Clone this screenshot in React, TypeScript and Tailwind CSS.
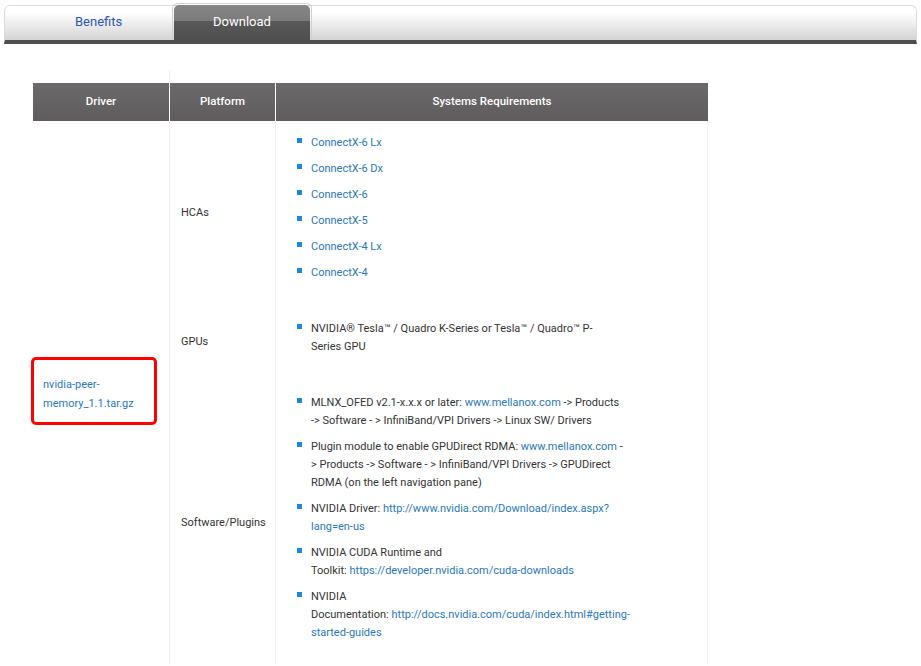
import React from "react";

const Bullet = () => (
  <span className="absolute left-[-14px] top-[4px] w-[5px] h-[5px] bg-[#1a8ad4]" />
);

const Li = ({ children }: { children: React.ReactNode }) => (
  <li className="relative mb-[8px] whitespace-nowrap">
    <Bullet />
    {children}
  </li>
);

const A = ({ children }: { children: React.ReactNode }) => (
  <a className="text-[#2a77bb]">{children}</a>
);

export default function App() {
  return (
    <div
      className="w-[921px] h-[666px] bg-white overflow-hidden text-[11px] text-[#333]"
      style={{ fontFamily: "Roboto, 'Liberation Sans', sans-serif" }}
    >
      {/* Tab bar */}
      <div className="pt-[5px] pl-[4px] w-[917px]">
        <div className="flex h-[39px] rounded-t-[6px] border-t border-x border-[#dcdcdc] border-b-4 border-b-[#4e4e4e] bg-[linear-gradient(#ffffff,#ffffff_20%,#ececec_55%,#d3d3d3)]">
          <div className="w-[167px] pl-[70px] pt-[6px] text-[13px] text-[#2c55b6]">Benefits</div>
          <div className="w-[140px] -mt-[3px] rounded-t-[6px] border border-b-0 border-[#cfcfcf] p-[1px] pb-0">
            <div className="h-full rounded-t-[5px] bg-[linear-gradient(#868686,#7b7b7b_46%,#585858_46%,#4f4f4f)] flex justify-center pt-[7px] text-[13px] text-white">
              Download
            </div>
          </div>
          <div className="flex-1" />
        </div>
      </div>

      {/* Table */}
      <div className="ml-[33px] mt-[26px] w-[675px]">
        <div className="grid grid-cols-[136px_106px_433px] h-[13px]">
          <div />
          <div className="border-l border-[#eeeeee]" />
          <div />
        </div>
        <div className="grid grid-cols-[136px_106px_433px] h-[38px] bg-[linear-gradient(#6b6969,#5e5c5c)] text-white text-[11.5px] font-medium">
          <div className="flex items-center justify-center">Driver</div>
          <div className="flex items-center justify-center border-l border-white">Platform</div>
          <div className="flex items-center justify-center border-l border-white">Systems Requirements</div>
        </div>
        <div className="grid grid-cols-[136px_106px_433px] grid-rows-[182px_76px_286px] border-r border-[#f0f0f0]">
          <div className="row-span-3 flex items-center pl-[10px] pt-[2px]">
            <div className="relative leading-[19px]">
              <span className="absolute left-[-12px] top-[-18px] w-[126px] h-[68px] border-[3px] border-[#ff0000] rounded-[5px]" />
              <A>
                nvidia-peer-
                <br />
                memory_1.1.tar.gz
              </A>
            </div>
          </div>

          <div className="flex items-center pl-[11px] pt-[2px] border-l border-[#f0f0f0]">HCAs</div>
          <div className="border-l border-[#f0f0f0] pl-[35px] pt-[13px] leading-[18px]">
            <ul>
              <Li><A>ConnectX-6 Lx</A></Li>
              <Li><A>ConnectX-6 Dx</A></Li>
              <Li><A>ConnectX-6</A></Li>
              <Li><A>ConnectX-5</A></Li>
              <Li><A>ConnectX-4 Lx</A></Li>
              <Li><A>ConnectX-4</A></Li>
            </ul>
          </div>

          <div className="flex items-center pl-[11px] pt-[2px] border-l border-[#f0f0f0]">GPUs</div>
          <div className="border-l border-[#f0f0f0] pl-[35px] pt-[17px] leading-[18px]">
            <ul>
              <Li>
                NVIDIA® Tesla™ / Quadro K-Series or Tesla™ / Quadro™ P-
                <br />
                Series GPU
              </Li>
            </ul>
          </div>

          <div className="flex items-center pl-[11px] pt-[2px] border-l border-[#f0f0f0]">Software/Plugins</div>
          <div className="border-l border-[#f0f0f0] pl-[35px] pt-[15px] leading-[18px]">
            <ul>
              <Li>
                MLNX_OFED v2.1-x.x.x or later: <A>www.mellanox.com</A> -&gt; Products
                <br />
                -&gt; Software - &gt; InfiniBand/VPI Drivers -&gt; Linux SW/ Drivers
              </Li>
              <Li>
                Plugin module to enable GPUDirect RDMA: <A>www.mellanox.com</A> -
                <br />
                &gt; Products -&gt; Software - &gt; InfiniBand/VPI Drivers -&gt; GPUDirect
                <br />
                RDMA (on the left navigation pane)
              </Li>
              <Li>
                NVIDIA Driver: <A>http://www.nvidia.com/Download/index.aspx?</A>
                <br />
                <A>lang=en-us</A>
              </Li>
              <Li>
                NVIDIA CUDA Runtime and
                <br />
                Toolkit: <A>https://developer.nvidia.com/cuda-downloads</A>
              </Li>
              <Li>
                NVIDIA
                <br />
                Documentation: <A>http://docs.nvidia.com/cuda/index.html#getting-</A>
                <br />
                <A>started-guides</A>
              </Li>
            </ul>
          </div>
        </div>
      </div>
    </div>
  );
}
